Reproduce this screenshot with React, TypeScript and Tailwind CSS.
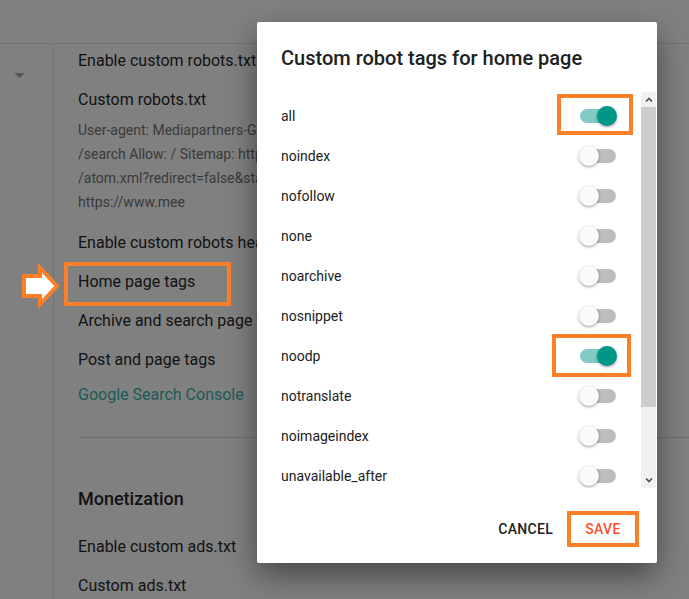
import React from "react";

const ORANGE = "border-[#ff7f27]";

const tags: { name: string; on: boolean; mark?: "a" | "b" }[] = [
  { name: "all", on: true, mark: "a" },
  { name: "noindex", on: false },
  { name: "nofollow", on: false },
  { name: "none", on: false },
  { name: "noarchive", on: false },
  { name: "nosnippet", on: false },
  { name: "noodp", on: true, mark: "b" },
  { name: "notranslate", on: false },
  { name: "noimageindex", on: false },
  { name: "unavailable_after", on: false },
];

function Toggle({ on }: { on: boolean }) {
  return (
    <div className="relative w-[38px] h-[20px] flex items-center">
      <div
        className={`w-[36px] h-[14px] rounded-full ml-[1px] ${
          on ? "bg-[#80cbc4]" : "bg-[#bdbdbd]"
        }`}
      />
      <div
        className={`absolute top-0 w-[20px] h-[20px] rounded-full shadow-[0_1px_3px_rgba(0,0,0,0.4)] ${
          on ? "left-[18px] bg-[#009688]" : "left-0 bg-[#fafafa]"
        }`}
      />
    </div>
  );
}

function Chevron({ up }: { up: boolean }) {
  return (
    <svg width="8" height="5" viewBox="0 0 8 5">
      <path
        d={up ? "M1 4.5 L4 1.5 L7 4.5" : "M1 0.5 L4 3.5 L7 0.5"}
        fill="none"
        stroke="#505050"
        strokeWidth="1.6"
      />
    </svg>
  );
}

function Dialog() {
  return (
    <div className="absolute left-[257px] top-[22px] w-[400px] h-[541px] bg-white rounded-[2px] shadow-[0_12px_30px_rgba(0,0,0,0.45)] flex flex-col">
      <h2 className="pl-6 pt-[22px] text-[20px] leading-7 font-medium text-[#212121]">
        Custom robot tags for home page
      </h2>

      <div className="mt-5 h-[396px] flex overflow-hidden">
        <div className="flex-1 pt-1">
          {tags.map((t) => (
            <div key={t.name} className="h-10 flex items-center justify-between pl-6 pr-6">
              <span className="text-[14px] text-[#212121]">{t.name}</span>
              <div className="relative">
                <Toggle on={t.on} />
                {t.mark === "a" && (
                  <div className={`absolute -left-[22px] -top-[12px] w-[76px] h-[41px] border-4 ${ORANGE}`} />
                )}
                {t.mark === "b" && (
                  <div className={`absolute -left-[27px] -top-[12px] w-[79px] h-[43px] border-4 ${ORANGE}`} />
                )}
              </div>
            </div>
          ))}
        </div>

        {/* scrollbar */}
        <div className="w-[15px] mr-px flex flex-col bg-[#f1f1f1]">
          <div className="h-[15px] flex items-center justify-center">
            <Chevron up />
          </div>
          <div className="h-[300px] bg-[#cdcdcd]" />
          <div className="flex-1" />
          <div className="h-[15px] flex items-center justify-center">
            <Chevron up={false} />
          </div>
        </div>
      </div>

      <div className="flex-1 flex justify-end items-start pt-[23px] pr-[18px]">
        <button className="h-9 px-2 mr-[6px] text-[14px] font-medium tracking-[0.3px] text-[#212121]">
          CANCEL
        </button>
        <button className={`h-9 w-[72px] border-4 ${ORANGE} text-[14px] font-medium tracking-[0.3px] text-[#f9502f]`}>
          SAVE
        </button>
      </div>
    </div>
  );
}

function Arrow() {
  return (
    <svg width="42" height="44" viewBox="0 0 42 44" className="absolute -left-[59px] -top-[8px]">
      <polygon
        points="5,12 21,12 21,4 38,22 21,40 21,32 5,32"
        fill="#ffffff"
        stroke="#ff7f27"
        strokeWidth="4"
        strokeLinejoin="miter"
      />
    </svg>
  );
}

export default function App() {
  return (
    <div
      className="relative w-[689px] h-[599px] overflow-hidden bg-[#808080]"
      style={{ fontFamily: "Roboto, 'Liberation Sans', sans-serif" }}
    >
      <div className="h-[44px] border-b border-[#747474]" />

      <div className="flex h-[555px]">
        <div className="w-[54px] border-r border-[#747474] flex justify-center pt-[29px] pr-[14px]">
          <svg width="11" height="5" viewBox="0 0 11 5">
            <polygon points="0.5,0 10.5,0 5.5,5" fill="#555555" />
          </svg>
        </div>

        <div className="flex-1 pl-6 pt-[5px] flex flex-col text-[16px] leading-6 text-[#121212] whitespace-nowrap">
          <div className="w-[179px] overflow-hidden">Enable custom robots.txt</div>
          <div className="mt-[15px]">Custom robots.txt</div>
          <div className="mt-[6px] w-[179px] overflow-hidden text-[14px] leading-6 text-[#3a3a3a]">
            <div>User-agent: Mediapartners-Google Disallow: User-agent: * Disallow:</div>
            <div>/search Allow: / Sitemap: https://www.meethtech.com/</div>
            <div>/atom.xml?redirect=false&amp;start-index=1&amp;max-results=500</div>
            <div>https://www.mee</div>
          </div>
          <div className="mt-[17px] w-[179px] overflow-hidden">Enable custom robots header tags</div>
          <div className="mt-[15px]">
            <span className="relative">
              Home page tags
              <Arrow />
              <span className={`absolute -left-[14px] -top-[10px] w-[167px] h-[44px] border-4 ${ORANGE}`} />
            </span>
          </div>
          <div className="mt-[15px] w-[179px] overflow-hidden">Archive and search page tags</div>
          <div className="mt-[15px]">Post and page tags</div>
          <div className="mt-[11px] text-[#1a5c58]">Google Search Console</div>
          <div className="mt-[30px] h-px bg-[#6e6e6e]" />
          <div className="mt-[49px] text-[18px] font-medium">Monetization</div>
          <div className="mt-6">Enable custom ads.txt</div>
          <div className="mt-[15px]">Custom ads.txt</div>
        </div>
      </div>

      <Dialog />
    </div>
  );
}
